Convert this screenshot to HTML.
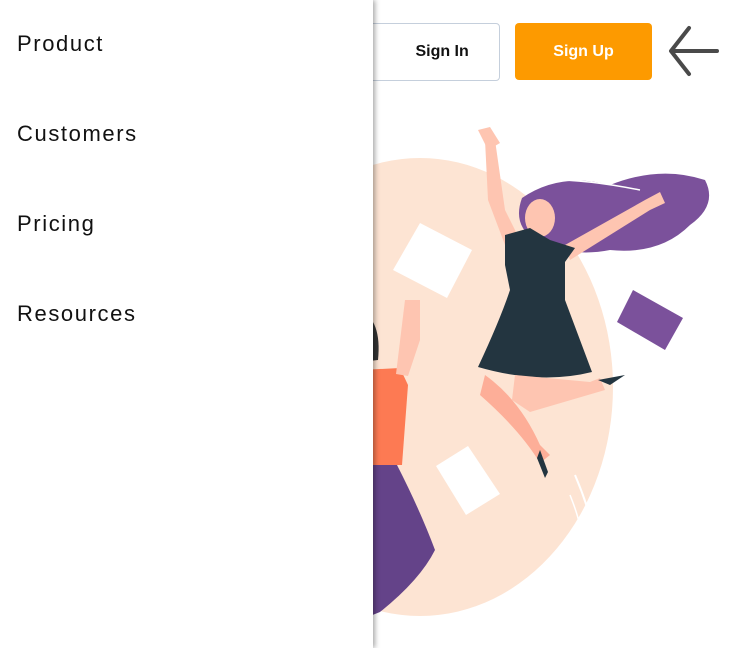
<!DOCTYPE html>
<html><head><style>
html,body{margin:0;padding:0;width:741px;height:648px;overflow:hidden;background:#fff;font-family:"Liberation Sans",sans-serif}
.side{position:absolute;left:0;top:0;width:373px;height:648px;background:#fff;z-index:2;box-shadow:2px 0 5px rgba(0,0,0,.35)}
.side div{position:absolute;left:17px;font-size:22px;color:#111;letter-spacing:1.6px}
.btn{position:absolute;top:23px;height:56px;border-radius:4px;font-weight:bold;font-size:16px;display:flex;align-items:center;justify-content:center}
</style></head><body>
<svg width="741" height="648" style="position:absolute;left:0;top:0">
<ellipse cx="420" cy="387" rx="193" ry="229" fill="#fde4d3"/>
<path d="M575 475 Q590 510 597 545" stroke="#fff" stroke-width="2" fill="none"/>
<path d="M570 495 Q580 520 580 530" stroke="#fff" stroke-width="1.5" fill="none"/>
<path d="M360 370 L400 368 L408 385 L402 465 L360 465Z" fill="#fd7a53"/>
<path d="M360 465 L397 465 Q420 510 435 550 Q420 580 380 612 L360 620Z" fill="#644389"/>
<path d="M360 310 Q382 320 378 360 L360 362Z" fill="#333"/>
<path d="M405 300 L420 300 L420 340 L408 376 L396 374Z" fill="#fec5b1"/>
<polygon points="420,223 472,250 447,298 393,270" fill="#fff"/>
<polygon points="436,466 468,446 500,494 466,515" fill="#fff"/>
<polygon points="633,290 683,318 665,350 617,322" fill="#7b519b"/>
<line x1="640" y1="292" x2="682" y2="316" stroke="#fff" stroke-width="2"/>
<path d="M522 198 Q560 172 610 185 Q660 165 705 180 Q718 205 690 225 Q660 255 610 250 Q570 258 535 240 Q512 225 522 198Z" fill="#7b519b"/>
<path d="M538 180 Q580 178 640 190" stroke="#fff" stroke-width="1.5" fill="none"/>
<path d="M485 140 L495 140 L505 210 L520 240 L505 245 L488 200Z" fill="#fec5b1"/>
<path d="M478 130 L490 127 L500 143 L488 150Z" fill="#fec5b1"/>
<path d="M565 245 L645 200 L660 192 L665 203 L650 210 L570 260Z" fill="#fec5b1"/>
<ellipse cx="540" cy="218" rx="15" ry="19" fill="#fec5b1"/>
<path d="M505 235 L530 228 L550 240 L575 248 L565 262 L565 300 Q580 340 592 372 Q540 385 478 367 Q500 320 510 290 L505 265Z" fill="#233540"/>
<path d="M485 375 Q520 400 540 445 L550 455 L540 463 Q520 430 480 395Z" fill="#fdae98"/>
<path d="M515 375 L590 382 L600 378 L605 390 L530 412 L512 400Z" fill="#fec5b1"/>
<path d="M540 450 L548 472 L545 478 L537 458Z" fill="#233540"/>
<path d="M598 380 L625 375 L610 385Z" fill="#233540"/>
</svg>
<div class="side">
<div style="top:31px">Product</div>
<div style="top:121px">Customers</div>
<div style="top:211px">Pricing</div>
<div style="top:301px">Resources</div>
</div>
<div class="btn" style="left:362px;width:136px;border:1px solid #c5cfdc;background:#fff;color:#111;z-index:1">&nbsp;&nbsp;&nbsp;&nbsp;&nbsp;Sign In</div>
<div class="btn" style="left:515px;width:137px;height:57px;background:#fd9a00;color:#fff">Sign Up</div>
<svg width="60" height="60" style="position:absolute;left:665px;top:22px">
<path d="M52 29 L8 29 M24 6 L6 29 L24 52" stroke="#4a4a4a" stroke-width="4" fill="none" stroke-linecap="round" stroke-linejoin="round"/>
</svg>
</body></html>
